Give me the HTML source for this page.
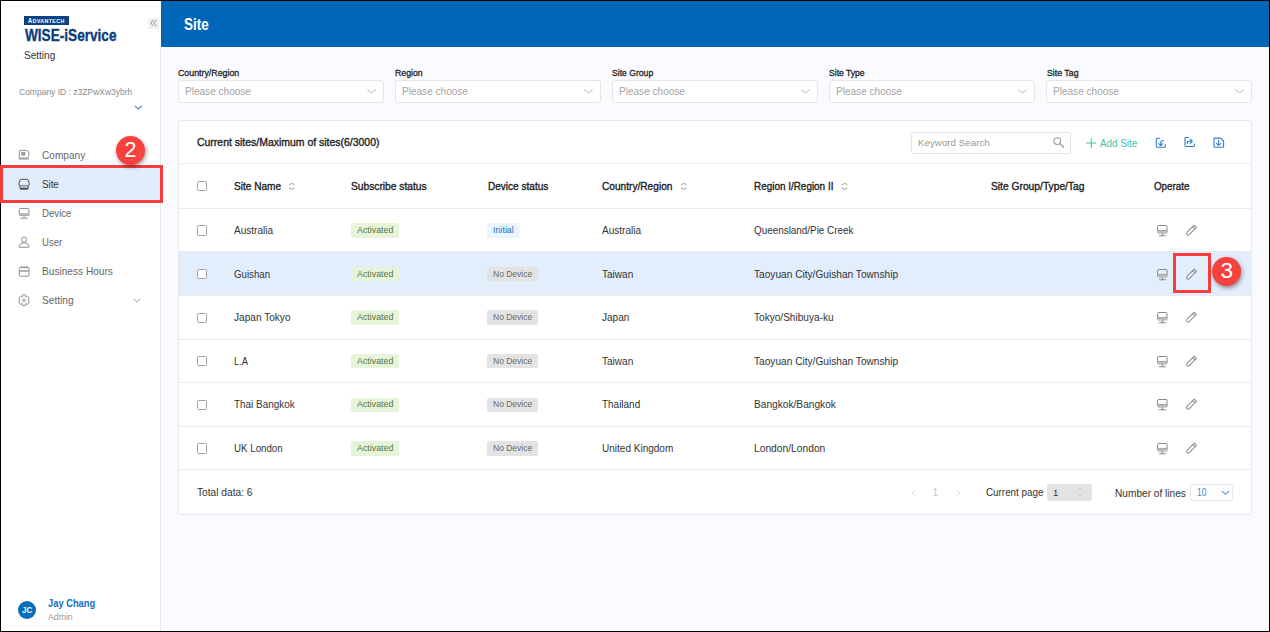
<!DOCTYPE html>
<html><head><meta charset="utf-8">
<style>
*{margin:0;padding:0;box-sizing:border-box}
html,body{width:1270px;height:632px;overflow:hidden;background:#000}
body{font-family:"Liberation Sans",sans-serif;position:relative}
.t{position:absolute;white-space:nowrap;line-height:1;transform-origin:0 50%}
.b{position:absolute}
</style></head><body>
<div class="b" style="left:1.00px;top:1.00px;width:1268.00px;height:630.00px;background:#f9fbfe"></div>
<div class="b" style="left:1.00px;top:1.00px;width:159.00px;height:630.00px;background:#fff"></div>
<div class="b" style="left:160.00px;top:47.00px;width:1.00px;height:584.00px;background:#e8e8ea"></div>
<div class="b" style="left:161.00px;top:1.00px;width:1108.00px;height:46.00px;background:#0066b7"></div>
<div class="t" style="left:184.00px;top:16.09px;font-size:16.20px;color:#fff;font-weight:bold;transform:scaleX(0.8280);">Site</div>
<div class="b" style="left:148.00px;top:17.50px;width:11.00px;height:11.50px;background:#f0f0f0"></div>
<svg class="b" style="left:150.00px;top:19.00px;" width="7.00" height="8.00" viewBox="0 0 7 8"><path d="M3.2 1 L0.8 4 L3.2 7 M6.2 1 L3.8 4 L6.2 7" fill="none" stroke="#888" stroke-width="0.9"/></svg>
<div class="b" style="left:24.00px;top:15.70px;width:45.00px;height:9.10px;background:#0b4283"></div>
<div class="t" style="left:28.20px;top:17.61px;font-size:6.60px;color:#fff;font-weight:bold;transform:scaleX(0.87);letter-spacing:0.45px">A<span style="font-size:6.1px">DVANTECH</span></div>
<div class="t" style="left:25.20px;top:28.18px;font-size:16.80px;color:#0b3d7c;font-weight:bold;transform:scaleX(0.8107);-webkit-text-stroke:0.35px #0b3d7c">WISE-iService</div>
<div class="t" style="left:24.30px;top:50.60px;font-size:10.40px;color:#333;transform:scaleX(0.9667);">Setting</div>
<div class="t" style="left:18.50px;top:87.91px;font-size:9.20px;color:#8a8a8a;transform:scaleX(0.9249);">Company ID : z3ZPwXw3ybrh</div>
<svg class="b" style="left:133.50px;top:104.50px;" width="9.00" height="5.00" viewBox="0 0 9 5"><path d="M0.8 1.0 L4.3 4.0 L7.8 1.0" fill="none" stroke="#4a94d8" stroke-width="1.1"/></svg>
<div class="b" style="left:1.00px;top:168.00px;width:159.00px;height:31.80px;background:#e1edfa"></div>
<div class="t" style="left:41.70px;top:149.72px;font-size:11.20px;color:#666;transform:scaleX(0.9033);">Company</div>
<div class="t" style="left:41.70px;top:178.78px;font-size:11.20px;color:#333;transform:scaleX(0.8705);">Site</div>
<div class="t" style="left:41.70px;top:207.82px;font-size:11.20px;color:#666;transform:scaleX(0.8617);">Device</div>
<div class="t" style="left:41.70px;top:236.92px;font-size:11.20px;color:#666;transform:scaleX(0.8542);">User</div>
<div class="t" style="left:41.70px;top:265.97px;font-size:11.20px;color:#666;transform:scaleX(0.9052);">Business Hours</div>
<div class="t" style="left:41.70px;top:295.02px;font-size:11.20px;color:#666;transform:scaleX(0.9062);">Setting</div>
<svg class="b" style="left:132.50px;top:298.20px;" width="8.00" height="5.00" viewBox="0 0 8 5"><path d="M0.6 0.8 L4 4 L7.4 0.8" fill="none" stroke="#999" stroke-width="0.9"/></svg>
<svg class="b" style="left:16.00px;top:146.00px;" width="18.00" height="18.00" viewBox="0 0 18 18"><path d="M3.3 13.2 V5.2 Q3.3 4.4 4.1 4.4 H10.2 Q13 4.4 13 8.2 Q13 10.6 11.6 11.4" fill="none" stroke="#888" stroke-width="0.95"/><rect x="5.1" y="6" width="4.3" height="3.7" fill="#a0a0a0"/><rect x="2.9" y="11.3" width="10" height="2.4" rx="0.6" fill="#b0b0b0"/></svg>
<svg class="b" style="left:16.00px;top:175.00px;" width="18.00" height="18.00" viewBox="0 0 18 18"><path d="M5 4.3 H11.2 Q11.9 4.3 12.1 5 L13.3 8.8 Q13.5 9.5 12.9 10 L12.2 10.6 V13.4 Q12.2 14.2 11.4 14.2 H4.8 Q4 14.2 4 13.4 V10.6 L3.3 10 Q2.7 9.5 2.9 8.8 L4.1 5 Q4.3 4.3 5 4.3 Z" fill="none" stroke="#555" stroke-width="1"/><path d="M3.1 9.6 Q4.4 11.5 5.7 10.5 Q7 11.7 8.1 10.5 Q9.3 11.7 10.5 10.5 Q11.8 11.5 13.1 9.6" fill="none" stroke="#555" stroke-width="0.9"/><rect x="4" y="12.4" width="8.2" height="1.8" rx="0.5" fill="#5a5a5a"/></svg>
<svg class="b" style="left:16.00px;top:204.00px;" width="18.00" height="18.00" viewBox="0 0 18 18"><rect x="3.3" y="4.45" width="9.7" height="7.1" rx="0.9" fill="none" stroke="#888" stroke-width="0.95"/><rect x="3" y="9.1" width="10.3" height="2.6" fill="#b8b8b8"/><path d="M8.1 11.6 V13.8 M4.4 14.2 H11.9" stroke="#8e8e8e" stroke-width="1"/></svg>
<svg class="b" style="left:16.00px;top:233.00px;" width="18.00" height="18.00" viewBox="0 0 18 18"><circle cx="8.1" cy="6.6" r="2.55" fill="none" stroke="#888" stroke-width="0.95"/><path d="M3.4 14.3 Q2.8 14.3 3 13.5 Q4 9.6 8.1 9.6 Q12.2 9.6 13.2 13.5 Q13.4 14.3 12.8 14.3 Z" fill="none" stroke="#888" stroke-width="0.95" stroke-linejoin="round"/></svg>
<svg class="b" style="left:16.00px;top:262.00px;" width="18.00" height="18.00" viewBox="0 0 18 18"><rect x="3.3" y="5.6" width="9.7" height="8.6" rx="1" fill="none" stroke="#888" stroke-width="0.95"/><rect x="3.3" y="8" width="9.7" height="2" fill="#b0b0b0"/><path d="M5.3 4 V6 M8.1 4 V6 M10.8 4 V6" stroke="#888" stroke-width="1"/></svg>
<svg class="b" style="left:16.00px;top:291.00px;" width="18.00" height="18.00" viewBox="0 0 18 18"><path d="M6.13 6.05 A1.92 1.92 0 1 1 9.88 6.05 A1.92 1.92 0 1 1 11.75 9.30 A1.92 1.92 0 1 1 9.88 12.55 A1.92 1.92 0 1 1 6.13 12.55 A1.92 1.92 0 1 1 4.25 9.30 A1.92 1.92 0 1 1 6.13 6.05 Z" fill="none" stroke="#888" stroke-width="0.95" stroke-linejoin="round"/><circle cx="8" cy="9.3" r="1.35" fill="none" stroke="#888" stroke-width="0.95"/></svg>
<div class="b" style="left:0.00px;top:165.00px;width:163.00px;height:37.60px;border:3px solid #f83c3e;background:transparent"></div>
<div class="b" style="left:116.00px;top:135.80px;width:29.00px;height:29.00px;background:#f8423f;border-radius:50%;box-shadow:1px 2px 4px rgba(0,0,0,0.4)"></div>
<div class="t" style="left:121.50px;top:139.80px;font-size:21.50px;color:#fff;width:18px;text-align:center">2</div>
<div class="b" style="left:18.00px;top:600.60px;width:18.00px;height:18.00px;background:#0a6cbe;border-radius:50%"></div>
<div class="t" style="left:22.00px;top:605.85px;font-size:8.80px;color:#fff;font-weight:bold;transform:scaleX(0.9067);">JC</div>
<div class="t" style="left:47.60px;top:597.79px;font-size:11.00px;color:#0f6ec6;font-weight:bold;transform:scaleX(0.8485);">Jay Chang</div>
<div class="t" style="left:47.60px;top:612.67px;font-size:8.30px;color:#999;transform:scaleX(1.0498);">Admin</div>
<div class="t" style="left:178.30px;top:67.86px;font-size:9.50px;color:#222;transform:scaleX(0.9271);-webkit-text-stroke:0.30px #222">Country/Region</div>
<div class="b" style="left:178.00px;top:80.00px;width:205.60px;height:22.60px;background:#fff;border:1px solid #e6e6e8;border-radius:3px"></div>
<div class="t" style="left:184.80px;top:86.12px;font-size:11.20px;color:#a3a3a3;transform:scaleX(0.8983);">Please choose</div>
<svg class="b" style="left:367.20px;top:89.00px;" width="9.00" height="5.00" viewBox="0 0 9 5"><path d="M0.4 0.7 L4.5 3.9 L8.6 0.7" fill="none" stroke="#aaa" stroke-width="0.9"/></svg>
<div class="t" style="left:395.35px;top:67.86px;font-size:9.50px;color:#222;transform:scaleX(0.9168);-webkit-text-stroke:0.30px #222">Region</div>
<div class="b" style="left:395.00px;top:80.00px;width:205.60px;height:22.60px;background:#fff;border:1px solid #e6e6e8;border-radius:3px"></div>
<div class="t" style="left:401.85px;top:86.12px;font-size:11.20px;color:#a3a3a3;transform:scaleX(0.8983);">Please choose</div>
<svg class="b" style="left:584.25px;top:89.00px;" width="9.00" height="5.00" viewBox="0 0 9 5"><path d="M0.4 0.7 L4.5 3.9 L8.6 0.7" fill="none" stroke="#aaa" stroke-width="0.9"/></svg>
<div class="t" style="left:612.40px;top:67.86px;font-size:9.50px;color:#222;transform:scaleX(0.9072);-webkit-text-stroke:0.30px #222">Site Group</div>
<div class="b" style="left:612.00px;top:80.00px;width:205.60px;height:22.60px;background:#fff;border:1px solid #e6e6e8;border-radius:3px"></div>
<div class="t" style="left:618.90px;top:86.12px;font-size:11.20px;color:#a3a3a3;transform:scaleX(0.8983);">Please choose</div>
<svg class="b" style="left:801.30px;top:89.00px;" width="9.00" height="5.00" viewBox="0 0 9 5"><path d="M0.4 0.7 L4.5 3.9 L8.6 0.7" fill="none" stroke="#aaa" stroke-width="0.9"/></svg>
<div class="t" style="left:829.45px;top:67.86px;font-size:9.50px;color:#222;transform:scaleX(0.9028);-webkit-text-stroke:0.30px #222">Site Type</div>
<div class="b" style="left:829.00px;top:80.00px;width:205.60px;height:22.60px;background:#fff;border:1px solid #e6e6e8;border-radius:3px"></div>
<div class="t" style="left:835.95px;top:86.12px;font-size:11.20px;color:#a3a3a3;transform:scaleX(0.8983);">Please choose</div>
<svg class="b" style="left:1018.35px;top:89.00px;" width="9.00" height="5.00" viewBox="0 0 9 5"><path d="M0.4 0.7 L4.5 3.9 L8.6 0.7" fill="none" stroke="#aaa" stroke-width="0.9"/></svg>
<div class="t" style="left:1046.50px;top:67.86px;font-size:9.50px;color:#222;transform:scaleX(0.9223);-webkit-text-stroke:0.30px #222">Site Tag</div>
<div class="b" style="left:1046.00px;top:80.00px;width:205.60px;height:22.60px;background:#fff;border:1px solid #e6e6e8;border-radius:3px"></div>
<div class="t" style="left:1053.00px;top:86.12px;font-size:11.20px;color:#a3a3a3;transform:scaleX(0.8983);">Please choose</div>
<svg class="b" style="left:1235.40px;top:89.00px;" width="9.00" height="5.00" viewBox="0 0 9 5"><path d="M0.4 0.7 L4.5 3.9 L8.6 0.7" fill="none" stroke="#aaa" stroke-width="0.9"/></svg>
<div class="b" style="left:178.00px;top:120.00px;width:1074.00px;height:394.50px;background:#fff;border:1px solid #e8e8ea;border-radius:3px"></div>
<div class="t" style="left:196.70px;top:136.56px;font-size:10.80px;color:#222;transform:scaleX(0.9683);-webkit-text-stroke:0.35px #222">Current sites/Maximum of sites(6/3000)</div>
<div class="b" style="left:179.00px;top:163.20px;width:1071.50px;height:1.00px;background:#eceef2"></div>
<div class="b" style="left:911.30px;top:131.90px;width:159.30px;height:22.10px;background:#fff;border:1px solid #e1e4ea;border-radius:3px"></div>
<div class="t" style="left:917.90px;top:137.50px;font-size:9.80px;color:#999;transform:scaleX(0.9985);">Keyword Search</div>
<svg class="b" style="left:1048.00px;top:133.00px;" width="22.00" height="20.00" viewBox="0 0 22 20"><circle cx="9.3" cy="8.1" r="3.4" fill="none" stroke="#9a9a9a" stroke-width="1.15"/><path d="M11.8 10.6 L15.6 14.3" stroke="#9a9a9a" stroke-width="1.2" stroke-linecap="round"/></svg>
<svg class="b" style="left:1085.80px;top:138.20px;" width="10.50" height="10.00" viewBox="0 0 10 10"><path d="M5 0 V10 M0 5 H10" stroke="#3fc4a0" stroke-width="1"/></svg>
<div class="t" style="left:1100.10px;top:137.93px;font-size:10.60px;color:#3fc4a0;transform:scaleX(0.9308);">Add Site</div>
<svg class="b" style="left:1152.00px;top:133.00px;" width="18.00" height="18.00" viewBox="0 0 18 18"><path d="M7.7 5.3 H5.1 Q4.3 5.3 4.3 6.1 V13.5 Q4.3 14.3 5.1 14.3 H12.5 Q13.3 14.3 13.3 13.5 V11.4" fill="none" stroke="#2a7dcc" stroke-width="1.05" stroke-linecap="round"/><path d="M11.4 7.4 Q8.7 7.4 8.7 9.6 V12.4 M6.6 10.5 L8.7 12.6 L10.8 10.5" fill="none" stroke="#2a7dcc" stroke-width="1.05" stroke-linecap="round" stroke-linejoin="round"/></svg>
<svg class="b" style="left:1181.00px;top:133.00px;" width="18.00" height="18.00" viewBox="0 0 18 18"><path d="M7.7 4.4 H4.8 Q4 4.4 4 5.2 V12.6 Q4 13.4 4.8 13.4 H12.6 Q13.4 13.4 13.4 12.6 V11.1" fill="none" stroke="#2a7dcc" stroke-width="1.05" stroke-linecap="round"/><path d="M6.3 10.4 V9.1 Q6.3 8.3 7.1 8.3 H11.3 M9.3 6.2 L11.4 8.3 L9.3 10.4" fill="none" stroke="#2a7dcc" stroke-width="1.05" stroke-linecap="round" stroke-linejoin="round"/></svg>
<svg class="b" style="left:1210.00px;top:133.00px;" width="18.00" height="18.00" viewBox="0 0 18 18"><path d="M4.9 5.1 H10.6 L13.6 8 V13.4 Q13.6 14.3 12.7 14.3 H4.9 Q4 14.3 4 13.4 V6 Q4 5.1 4.9 5.1 Z" fill="none" stroke="#2a7dcc" stroke-width="1.05" stroke-linejoin="round"/><path d="M8.6 7.2 V12.3 M6.4 10.3 L8.6 12.5 L10.8 10.3" fill="none" stroke="#2a7dcc" stroke-width="1.05" stroke-linecap="round" stroke-linejoin="round"/></svg>
<div class="b" style="left:197.00px;top:181.30px;width:10.20px;height:10.20px;background:#fff;border:1px solid #a2a2a2;border-radius:1.5px"></div>
<div class="t" style="left:234.00px;top:180.89px;font-size:11.00px;color:#222;transform:scaleX(0.9152);-webkit-text-stroke:0.35px #222">Site Name</div>
<svg class="b" style="left:284.00px;top:178.00px;" width="16.00" height="16.00" viewBox="0 0 16 16"><path d="M5.4 6.6 L7.7 5.2 L10 6.6 M5.4 10.1 L7.7 11.5 L10 10.1" fill="none" stroke="#9c9c9c" stroke-width="1" stroke-linecap="round" stroke-linejoin="round"/></svg>
<div class="t" style="left:351.30px;top:180.89px;font-size:11.00px;color:#222;transform:scaleX(0.9297);-webkit-text-stroke:0.35px #222">Subscribe status</div>
<div class="t" style="left:487.60px;top:180.89px;font-size:11.00px;color:#222;transform:scaleX(0.9133);-webkit-text-stroke:0.35px #222">Device status</div>
<div class="t" style="left:601.50px;top:180.89px;font-size:11.00px;color:#222;transform:scaleX(0.9211);-webkit-text-stroke:0.35px #222">Country/Region</div>
<svg class="b" style="left:675.60px;top:178.00px;" width="16.00" height="16.00" viewBox="0 0 16 16"><path d="M5.4 6.6 L7.7 5.2 L10 6.6 M5.4 10.1 L7.7 11.5 L10 10.1" fill="none" stroke="#9c9c9c" stroke-width="1" stroke-linecap="round" stroke-linejoin="round"/></svg>
<div class="t" style="left:753.60px;top:180.89px;font-size:11.00px;color:#222;transform:scaleX(0.9017);-webkit-text-stroke:0.35px #222">Region I/Region II</div>
<svg class="b" style="left:837.20px;top:178.00px;" width="16.00" height="16.00" viewBox="0 0 16 16"><path d="M5.4 6.6 L7.7 5.2 L10 6.6 M5.4 10.1 L7.7 11.5 L10 10.1" fill="none" stroke="#9c9c9c" stroke-width="1" stroke-linecap="round" stroke-linejoin="round"/></svg>
<div class="t" style="left:991.30px;top:180.89px;font-size:11.00px;color:#222;transform:scaleX(0.9324);-webkit-text-stroke:0.35px #222">Site Group/Type/Tag</div>
<div class="t" style="left:1153.70px;top:180.89px;font-size:11.00px;color:#222;transform:scaleX(0.8906);-webkit-text-stroke:0.35px #222">Operate</div>
<div class="b" style="left:179.00px;top:207.60px;width:1071.50px;height:1.00px;background:#ebebeb"></div>
<div class="b" style="left:179.00px;top:251.30px;width:1071.50px;height:1.00px;background:#ebebeb"></div>
<div class="b" style="left:197.00px;top:225.40px;width:10.20px;height:10.20px;background:#fff;border:1px solid #a2a2a2;border-radius:1.5px"></div>
<div class="t" style="left:234.00px;top:225.09px;font-size:11.00px;color:#333;transform:scaleX(0.9112);">Australia</div>
<div class="b" style="left:350.90px;top:223.20px;width:48.30px;height:14.40px;background:#e6f4da;border-radius:2px"></div>
<div class="t" style="left:356.80px;top:225.98px;font-size:9.00px;color:#587540;transform:scaleX(0.9832);">Activated</div>
<div class="b" style="left:486.90px;top:223.20px;width:33.20px;height:14.40px;background:#e8f4fe;border-radius:2px"></div>
<div class="t" style="left:493.30px;top:225.98px;font-size:9.00px;color:#1e70c2;transform:scaleX(0.9900);">Initial</div>
<div class="t" style="left:601.50px;top:225.09px;font-size:11.00px;color:#333;transform:scaleX(0.9112);">Australia</div>
<div class="t" style="left:753.60px;top:225.09px;font-size:11.00px;color:#333;transform:scaleX(0.8990);">Queensland/Pie Creek</div>
<svg class="b" style="left:1152.00px;top:223.00px;" width="18.00" height="18.00" viewBox="0 0 18 18"><rect x="5.6" y="2.5" width="9.4" height="7.4" rx="1" fill="none" stroke="#888" stroke-width="1"/><rect x="5.4" y="7.1" width="9.8" height="3" fill="#bcbcbc"/><path d="M5.4 7.4 H15.2" stroke="#999" stroke-width="0.7"/><path d="M10.3 10.2 V12.3 M6.9 12.7 H13.8" stroke="#888" stroke-width="1.05"/></svg>
<svg class="b" style="left:1181.00px;top:223.00px;" width="18.00" height="18.00" viewBox="0 0 18 18"><g transform="translate(10.15 7.45) rotate(-45)"><path d="M-4.3 -1.55 H5.9 V1.55 H-4.3 A1.55 1.55 0 0 1 -4.3 -1.55 Z M3.9 -1.55 V1.55" fill="none" stroke="#888" stroke-width="0.95" stroke-linejoin="round"/></g></svg>
<div class="b" style="left:179.00px;top:252.20px;width:1071.50px;height:43.60px;background:#e2eefb"></div>
<div class="b" style="left:179.00px;top:294.90px;width:1071.50px;height:1.00px;background:#ebebeb"></div>
<div class="b" style="left:197.00px;top:269.00px;width:10.20px;height:10.20px;background:#fff;border:1px solid #a2a2a2;border-radius:1.5px"></div>
<div class="t" style="left:234.00px;top:268.69px;font-size:11.00px;color:#333;transform:scaleX(0.8811);">Guishan</div>
<div class="b" style="left:350.90px;top:266.80px;width:48.30px;height:14.40px;background:#e6f4da;border-radius:2px"></div>
<div class="t" style="left:356.80px;top:269.58px;font-size:9.00px;color:#587540;transform:scaleX(0.9832);">Activated</div>
<div class="b" style="left:486.90px;top:266.80px;width:50.90px;height:14.40px;background:#e3e3e3;border-radius:2px"></div>
<div class="t" style="left:492.80px;top:269.58px;font-size:9.00px;color:#6a6a6a;transform:scaleX(0.9442);">No Device</div>
<div class="t" style="left:601.50px;top:268.69px;font-size:11.00px;color:#333;transform:scaleX(0.9141);">Taiwan</div>
<div class="t" style="left:753.60px;top:268.69px;font-size:11.00px;color:#333;transform:scaleX(0.9217);">Taoyuan City/Guishan Township</div>
<svg class="b" style="left:1152.00px;top:266.60px;" width="18.00" height="18.00" viewBox="0 0 18 18"><rect x="5.6" y="2.5" width="9.4" height="7.4" rx="1" fill="none" stroke="#888" stroke-width="1"/><rect x="5.4" y="7.1" width="9.8" height="3" fill="#bcbcbc"/><path d="M5.4 7.4 H15.2" stroke="#999" stroke-width="0.7"/><path d="M10.3 10.2 V12.3 M6.9 12.7 H13.8" stroke="#888" stroke-width="1.05"/></svg>
<svg class="b" style="left:1181.00px;top:266.60px;" width="18.00" height="18.00" viewBox="0 0 18 18"><g transform="translate(10.15 7.45) rotate(-45)"><path d="M-4.3 -1.55 H5.9 V1.55 H-4.3 A1.55 1.55 0 0 1 -4.3 -1.55 Z M3.9 -1.55 V1.55" fill="none" stroke="#888" stroke-width="0.95" stroke-linejoin="round"/></g></svg>
<div class="b" style="left:179.00px;top:338.50px;width:1071.50px;height:1.00px;background:#ebebeb"></div>
<div class="b" style="left:197.00px;top:312.60px;width:10.20px;height:10.20px;background:#fff;border:1px solid #a2a2a2;border-radius:1.5px"></div>
<div class="t" style="left:234.00px;top:312.29px;font-size:11.00px;color:#333;transform:scaleX(0.9177);">Japan Tokyo</div>
<div class="b" style="left:350.90px;top:310.40px;width:48.30px;height:14.40px;background:#e6f4da;border-radius:2px"></div>
<div class="t" style="left:356.80px;top:313.18px;font-size:9.00px;color:#587540;transform:scaleX(0.9832);">Activated</div>
<div class="b" style="left:486.90px;top:310.40px;width:50.90px;height:14.40px;background:#e3e3e3;border-radius:2px"></div>
<div class="t" style="left:492.80px;top:313.18px;font-size:9.00px;color:#6a6a6a;transform:scaleX(0.9442);">No Device</div>
<div class="t" style="left:601.50px;top:312.29px;font-size:11.00px;color:#333;transform:scaleX(0.9109);">Japan</div>
<div class="t" style="left:753.60px;top:312.29px;font-size:11.00px;color:#333;transform:scaleX(0.9168);">Tokyo/Shibuya-ku</div>
<svg class="b" style="left:1152.00px;top:310.20px;" width="18.00" height="18.00" viewBox="0 0 18 18"><rect x="5.6" y="2.5" width="9.4" height="7.4" rx="1" fill="none" stroke="#888" stroke-width="1"/><rect x="5.4" y="7.1" width="9.8" height="3" fill="#bcbcbc"/><path d="M5.4 7.4 H15.2" stroke="#999" stroke-width="0.7"/><path d="M10.3 10.2 V12.3 M6.9 12.7 H13.8" stroke="#888" stroke-width="1.05"/></svg>
<svg class="b" style="left:1181.00px;top:310.20px;" width="18.00" height="18.00" viewBox="0 0 18 18"><g transform="translate(10.15 7.45) rotate(-45)"><path d="M-4.3 -1.55 H5.9 V1.55 H-4.3 A1.55 1.55 0 0 1 -4.3 -1.55 Z M3.9 -1.55 V1.55" fill="none" stroke="#888" stroke-width="0.95" stroke-linejoin="round"/></g></svg>
<div class="b" style="left:179.00px;top:382.10px;width:1071.50px;height:1.00px;background:#ebebeb"></div>
<div class="b" style="left:197.00px;top:356.20px;width:10.20px;height:10.20px;background:#fff;border:1px solid #a2a2a2;border-radius:1.5px"></div>
<div class="t" style="left:234.00px;top:355.89px;font-size:11.00px;color:#333;transform:scaleX(0.8479);">L.A</div>
<div class="b" style="left:350.90px;top:354.00px;width:48.30px;height:14.40px;background:#e6f4da;border-radius:2px"></div>
<div class="t" style="left:356.80px;top:356.78px;font-size:9.00px;color:#587540;transform:scaleX(0.9832);">Activated</div>
<div class="b" style="left:486.90px;top:354.00px;width:50.90px;height:14.40px;background:#e3e3e3;border-radius:2px"></div>
<div class="t" style="left:492.80px;top:356.78px;font-size:9.00px;color:#6a6a6a;transform:scaleX(0.9442);">No Device</div>
<div class="t" style="left:601.50px;top:355.89px;font-size:11.00px;color:#333;transform:scaleX(0.9141);">Taiwan</div>
<div class="t" style="left:753.60px;top:355.89px;font-size:11.00px;color:#333;transform:scaleX(0.9217);">Taoyuan City/Guishan Township</div>
<svg class="b" style="left:1152.00px;top:353.80px;" width="18.00" height="18.00" viewBox="0 0 18 18"><rect x="5.6" y="2.5" width="9.4" height="7.4" rx="1" fill="none" stroke="#888" stroke-width="1"/><rect x="5.4" y="7.1" width="9.8" height="3" fill="#bcbcbc"/><path d="M5.4 7.4 H15.2" stroke="#999" stroke-width="0.7"/><path d="M10.3 10.2 V12.3 M6.9 12.7 H13.8" stroke="#888" stroke-width="1.05"/></svg>
<svg class="b" style="left:1181.00px;top:353.80px;" width="18.00" height="18.00" viewBox="0 0 18 18"><g transform="translate(10.15 7.45) rotate(-45)"><path d="M-4.3 -1.55 H5.9 V1.55 H-4.3 A1.55 1.55 0 0 1 -4.3 -1.55 Z M3.9 -1.55 V1.55" fill="none" stroke="#888" stroke-width="0.95" stroke-linejoin="round"/></g></svg>
<div class="b" style="left:179.00px;top:425.70px;width:1071.50px;height:1.00px;background:#ebebeb"></div>
<div class="b" style="left:197.00px;top:399.80px;width:10.20px;height:10.20px;background:#fff;border:1px solid #a2a2a2;border-radius:1.5px"></div>
<div class="t" style="left:234.00px;top:399.49px;font-size:11.00px;color:#333;transform:scaleX(0.9024);">Thai Bangkok</div>
<div class="b" style="left:350.90px;top:397.60px;width:48.30px;height:14.40px;background:#e6f4da;border-radius:2px"></div>
<div class="t" style="left:356.80px;top:400.38px;font-size:9.00px;color:#587540;transform:scaleX(0.9832);">Activated</div>
<div class="b" style="left:486.90px;top:397.60px;width:50.90px;height:14.40px;background:#e3e3e3;border-radius:2px"></div>
<div class="t" style="left:492.80px;top:400.38px;font-size:9.00px;color:#6a6a6a;transform:scaleX(0.9442);">No Device</div>
<div class="t" style="left:601.50px;top:399.49px;font-size:11.00px;color:#333;transform:scaleX(0.9053);">Thailand</div>
<div class="t" style="left:753.60px;top:399.49px;font-size:11.00px;color:#333;transform:scaleX(0.9236);">Bangkok/Bangkok</div>
<svg class="b" style="left:1152.00px;top:397.40px;" width="18.00" height="18.00" viewBox="0 0 18 18"><rect x="5.6" y="2.5" width="9.4" height="7.4" rx="1" fill="none" stroke="#888" stroke-width="1"/><rect x="5.4" y="7.1" width="9.8" height="3" fill="#bcbcbc"/><path d="M5.4 7.4 H15.2" stroke="#999" stroke-width="0.7"/><path d="M10.3 10.2 V12.3 M6.9 12.7 H13.8" stroke="#888" stroke-width="1.05"/></svg>
<svg class="b" style="left:1181.00px;top:397.40px;" width="18.00" height="18.00" viewBox="0 0 18 18"><g transform="translate(10.15 7.45) rotate(-45)"><path d="M-4.3 -1.55 H5.9 V1.55 H-4.3 A1.55 1.55 0 0 1 -4.3 -1.55 Z M3.9 -1.55 V1.55" fill="none" stroke="#888" stroke-width="0.95" stroke-linejoin="round"/></g></svg>
<div class="b" style="left:179.00px;top:469.30px;width:1071.50px;height:1.00px;background:#ebebeb"></div>
<div class="b" style="left:197.00px;top:443.40px;width:10.20px;height:10.20px;background:#fff;border:1px solid #a2a2a2;border-radius:1.5px"></div>
<div class="t" style="left:234.00px;top:443.09px;font-size:11.00px;color:#333;transform:scaleX(0.8847);">UK London</div>
<div class="b" style="left:350.90px;top:441.20px;width:48.30px;height:14.40px;background:#e6f4da;border-radius:2px"></div>
<div class="t" style="left:356.80px;top:443.98px;font-size:9.00px;color:#587540;transform:scaleX(0.9832);">Activated</div>
<div class="b" style="left:486.90px;top:441.20px;width:50.90px;height:14.40px;background:#e3e3e3;border-radius:2px"></div>
<div class="t" style="left:492.80px;top:443.98px;font-size:9.00px;color:#6a6a6a;transform:scaleX(0.9442);">No Device</div>
<div class="t" style="left:601.50px;top:443.09px;font-size:11.00px;color:#333;transform:scaleX(0.9109);">United Kingdom</div>
<div class="t" style="left:753.60px;top:443.09px;font-size:11.00px;color:#333;transform:scaleX(0.9324);">London/London</div>
<svg class="b" style="left:1152.00px;top:441.00px;" width="18.00" height="18.00" viewBox="0 0 18 18"><rect x="5.6" y="2.5" width="9.4" height="7.4" rx="1" fill="none" stroke="#888" stroke-width="1"/><rect x="5.4" y="7.1" width="9.8" height="3" fill="#bcbcbc"/><path d="M5.4 7.4 H15.2" stroke="#999" stroke-width="0.7"/><path d="M10.3 10.2 V12.3 M6.9 12.7 H13.8" stroke="#888" stroke-width="1.05"/></svg>
<svg class="b" style="left:1181.00px;top:441.00px;" width="18.00" height="18.00" viewBox="0 0 18 18"><g transform="translate(10.15 7.45) rotate(-45)"><path d="M-4.3 -1.55 H5.9 V1.55 H-4.3 A1.55 1.55 0 0 1 -4.3 -1.55 Z M3.9 -1.55 V1.55" fill="none" stroke="#888" stroke-width="0.95" stroke-linejoin="round"/></g></svg>
<div class="t" style="left:196.50px;top:486.91px;font-size:10.80px;color:#333;transform:scaleX(0.9432);">Total data: 6</div>
<svg class="b" style="left:910.50px;top:489.80px;" width="5.00" height="6.00" viewBox="0 0 5 6"><path d="M3.8 0.6 L1.2 3 L3.8 5.4" fill="none" stroke="#ccc" stroke-width="0.9"/></svg>
<div class="t" style="left:932.40px;top:488.20px;font-size:10.40px;color:#c8c8c8;">1</div>
<svg class="b" style="left:955.50px;top:489.80px;" width="5.00" height="6.00" viewBox="0 0 5 6"><path d="M1.2 0.6 L3.8 3 L1.2 5.4" fill="none" stroke="#ccc" stroke-width="0.9"/></svg>
<div class="t" style="left:985.80px;top:487.32px;font-size:11.20px;color:#333;transform:scaleX(0.8795);">Current page</div>
<div class="b" style="left:1047.20px;top:483.80px;width:44.60px;height:17.00px;background:#e3e3e3;border-radius:3px"></div>
<div class="t" style="left:1053.00px;top:488.27px;font-size:9.60px;color:#333;">1</div>
<svg class="b" style="left:1076.00px;top:486.00px;" width="8.00" height="12.00" viewBox="0 0 8 12"><path d="M1 5 L4 2.3 L7 5 M1 7.5 L4 10.3 L7 7.5" fill="none" stroke="#c8c8c8" stroke-width="0.9"/></svg>
<div class="t" style="left:1115.40px;top:487.52px;font-size:11.20px;color:#333;transform:scaleX(0.9052);">Number of lines</div>
<div class="b" style="left:1190.00px;top:483.60px;width:43.00px;height:17.80px;background:#fff;border:1px solid #e8e8e8;border-radius:3px"></div>
<div class="t" style="left:1196.60px;top:487.97px;font-size:10.20px;color:#3a8ad2;transform:scaleX(0.8285);">10</div>
<svg class="b" style="left:1221.00px;top:489.50px;" width="9.00" height="5.00" viewBox="0 0 9 5"><path d="M0.8 1.1 L4.4 4.1 L8.1 1.1" fill="none" stroke="#4a94d8" stroke-width="1.1"/></svg>
<div class="b" style="left:1173.00px;top:253.00px;width:38.00px;height:40.00px;border:3px solid #f83c3e"></div>
<div class="b" style="left:1212.30px;top:257.00px;width:28.80px;height:28.80px;background:#f8423f;border-radius:50%;box-shadow:1px 2px 4px rgba(0,0,0,0.4)"></div>
<div class="t" style="left:1217.70px;top:260.15px;font-size:22.50px;color:#fff;width:18px;text-align:center">3</div>
</body></html>
